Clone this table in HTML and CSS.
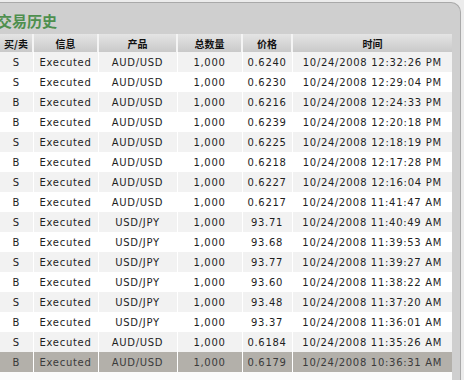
FILE: index.html
```html
<!DOCTYPE html>
<html>
<head>
<meta charset="utf-8">
<link rel="stylesheet" href="styles.css">
</head>
<body>
<div class="panel">
  <h2 class="title">交易历史</h2>
  <div class="grid-wrap">
    <table class="grid">
      <colgroup>
        <col class="c1"><col class="c2"><col class="c3"><col class="c4"><col class="c5"><col class="c6">
      </colgroup>
      <thead>
        <tr><th>买/卖</th><th>信息</th><th>产品</th><th>总数量</th><th>价格</th><th>时间</th></tr>
      </thead>
      <tbody>
        <tr class="odd"><td>S</td><td>Executed</td><td>AUD/USD</td><td>1,000</td><td>0.6240</td><td>10/24/2008 12:32:26 PM</td></tr>
        <tr><td>S</td><td>Executed</td><td>AUD/USD</td><td>1,000</td><td>0.6230</td><td>10/24/2008 12:29:04 PM</td></tr>
        <tr class="odd"><td>B</td><td>Executed</td><td>AUD/USD</td><td>1,000</td><td>0.6216</td><td>10/24/2008 12:24:33 PM</td></tr>
        <tr><td>B</td><td>Executed</td><td>AUD/USD</td><td>1,000</td><td>0.6239</td><td>10/24/2008 12:20:18 PM</td></tr>
        <tr class="odd"><td>S</td><td>Executed</td><td>AUD/USD</td><td>1,000</td><td>0.6225</td><td>10/24/2008 12:18:19 PM</td></tr>
        <tr><td>B</td><td>Executed</td><td>AUD/USD</td><td>1,000</td><td>0.6218</td><td>10/24/2008 12:17:28 PM</td></tr>
        <tr class="odd"><td>S</td><td>Executed</td><td>AUD/USD</td><td>1,000</td><td>0.6227</td><td>10/24/2008 12:16:04 PM</td></tr>
        <tr><td>B</td><td>Executed</td><td>AUD/USD</td><td>1,000</td><td>0.6217</td><td>10/24/2008 11:41:47 AM</td></tr>
        <tr class="odd"><td>S</td><td>Executed</td><td>USD/JPY</td><td>1,000</td><td>93.71</td><td>10/24/2008 11:40:49 AM</td></tr>
        <tr><td>B</td><td>Executed</td><td>USD/JPY</td><td>1,000</td><td>93.68</td><td>10/24/2008 11:39:53 AM</td></tr>
        <tr class="odd"><td>S</td><td>Executed</td><td>USD/JPY</td><td>1,000</td><td>93.77</td><td>10/24/2008 11:39:27 AM</td></tr>
        <tr><td>B</td><td>Executed</td><td>USD/JPY</td><td>1,000</td><td>93.60</td><td>10/24/2008 11:38:22 AM</td></tr>
        <tr class="odd"><td>S</td><td>Executed</td><td>USD/JPY</td><td>1,000</td><td>93.48</td><td>10/24/2008 11:37:20 AM</td></tr>
        <tr><td>B</td><td>Executed</td><td>USD/JPY</td><td>1,000</td><td>93.37</td><td>10/24/2008 11:36:01 AM</td></tr>
        <tr class="odd"><td>S</td><td>Executed</td><td>AUD/USD</td><td>1,000</td><td>0.6184</td><td>10/24/2008 11:35:26 AM</td></tr>
        <tr class="selected"><td>B</td><td>Executed</td><td>AUD/USD</td><td>1,000</td><td>0.6179</td><td>10/24/2008 10:36:31 AM</td></tr>
      </tbody>
    </table>
  </div>
</div>
</body>
</html>
```

FILE: styles.css
```css
html, body {
  margin: 0;
  padding: 0;
  background: #ececec;
}

.panel {
  margin-top: 2px;
  width: 460px;
  height: 377px;
  background: #cfcfcf;
  border-top: 1px solid #a9a9a9;
  border-right: 1px solid #a9a9a9;
  border-top-right-radius: 10px;
  overflow: hidden;
}

.title {
  margin: 0 0 0 -3px;
  padding-top: 4px;
  height: 27px;
  line-height: 27px;
  font-family: "Noto Sans CJK SC", sans-serif;
  font-size: 15px;
  font-weight: bold;
  color: #4e8f4e;
  white-space: nowrap;
}

.grid-wrap {
  width: 452px;
  background: #fbfbfb;
  height: 346px;
}

.grid {
  width: 452px;
  table-layout: fixed;
  border-collapse: collapse;
  font-family: "DejaVu Sans", Verdana, sans-serif;
  font-size: 10px;
  letter-spacing: 0.7px;
  color: #1e1e1e;
}

.c1 { width: 33px; }
.c2 { width: 65px; }
.c3 { width: 79px; }
.c4 { width: 65px; }
.c5 { width: 50px; }
.c6 { width: 160px; }

.grid th {
  height: 18px;
  padding: 0;
  background: linear-gradient(#e4e4e4, #c9c9c9);
  border-left: 2px solid #f4f4f4;
  font-family: "Noto Sans CJK SC", sans-serif;
  font-size: 10px;
  font-weight: bold;
  letter-spacing: 0;
  color: #111;
  text-align: center;
  white-space: nowrap;
  overflow: hidden;
}

.grid th:first-child {
  border-left: none;
}

.grid td {
  height: 20px;
  padding: 0;
  text-align: center;
  white-space: nowrap;
  overflow: hidden;
  border-left: 1px solid #ffffff;
}

.grid td:first-child {
  border-left: none;
}

.grid tbody tr {
  background: #ffffff;
}

.grid tbody tr.odd {
  background: #f2f2f2;
}

.grid tbody tr.selected {
  background: #b3b0aa;
  color: #3a3a3a;
}
```
